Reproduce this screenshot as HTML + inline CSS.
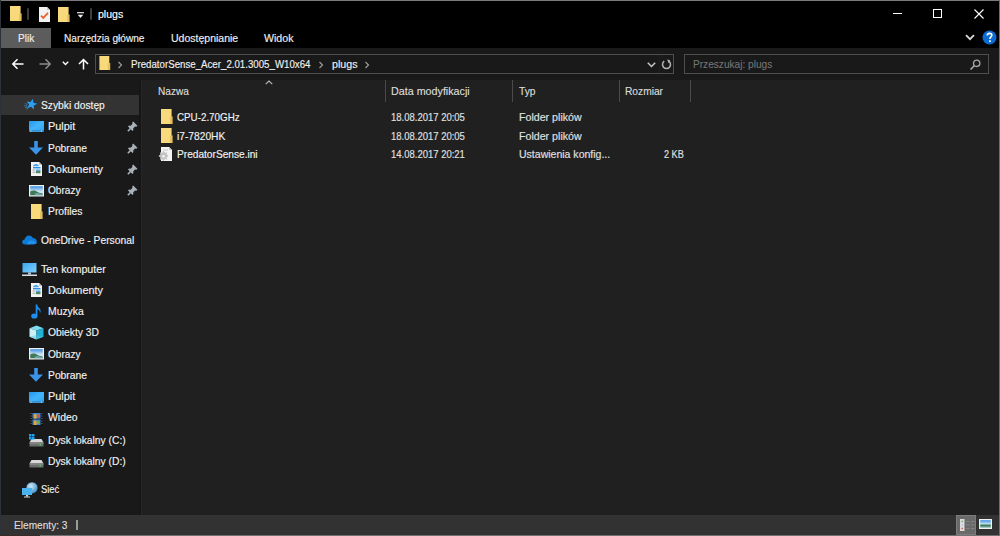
<!DOCTYPE html>
<html><head><meta charset="utf-8"><style>
html,body{margin:0;padding:0;width:1000px;height:536px;overflow:hidden;background:#000}
body{position:relative;font-family:"Liberation Sans",sans-serif}
.t{position:absolute;white-space:nowrap;transform-origin:0 0;-webkit-text-stroke:0.15px currentColor}
.r{position:absolute}
.i{position:absolute;display:block}
</style></head><body>
<div class="r" style="left:0;top:0;width:1000px;height:536px;background:#000"></div>
<div class="r" style="left:0;top:0;width:1000px;height:1px;background:#7a7a7a"></div>
<div class="r" style="left:0;top:0;width:1px;height:536px;background:#2c313a"></div>
<div class="r" style="left:999px;top:0;width:1px;height:536px;background:#6e6e6e"></div>
<div class="r" style="left:40px;top:535px;width:960px;height:1px;background:#707070"></div>
<div class="r" style="left:0;top:535px;width:40px;height:1px;background:#3a2a28"></div>
<div class="r" style="left:1px;top:48px;width:998px;height:32px;background:#191919"></div>
<div class="r" style="left:1px;top:80px;width:140px;height:435px;background:#191919"></div>
<div class="r" style="left:141px;top:80px;width:858px;height:435px;background:#202020"></div>
<div class="r" style="left:139px;top:80px;width:2px;height:435px;background:#161616"></div>
<div class="r" style="left:141px;top:80px;width:1px;height:435px;background:#262626"></div>
<div class="r" style="left:1px;top:515px;width:998px;height:20px;background:#323232"></div>
<svg class="i" style="left:10px;top:6px" width="12" height="15" viewBox="0 0 12 15"><path d="M0 0H10.6V15H0Z" fill="#f8d97c"/><path d="M9 8.2L11.6 7.2V15H9Z" fill="#e6c05e"/></svg>
<div class="r" style="left:27px;top:8px;width:2px;height:12px;background:#3e3e3e;border-radius:1px"></div>
<svg class="i" style="left:39px;top:7px" width="11" height="15" viewBox="0 0 11 15"><path d="M0 0H8L11 3V15H0Z" fill="#f2f2f2"/><path d="M8 0V3H11Z" fill="#c9c9c9"/><path d="M2 8.6L4.3 10.9L9 5.8" fill="none" stroke="#e8602c" stroke-width="1.7"/></svg>
<svg class="i" style="left:58px;top:7px" width="12" height="15" viewBox="0 0 12 15"><path d="M0 0H10.6V15H0Z" fill="#f8d97c"/><path d="M9 8.2L11.6 7.2V15H9Z" fill="#e6c05e"/></svg>
<svg class="i" style="left:77px;top:12px" width="7" height="7" viewBox="0 0 7 7"><rect x="0" y="0" width="7" height="1.3" fill="#cfcfcf"/><path d="M0.8 2.8H6.2L3.5 6Z" fill="#eee"/></svg>
<div class="r" style="left:90px;top:8px;width:2px;height:12px;background:#3e3e3e;border-radius:1px"></div>
<div class="t" style="left:98.30px;top:9px;font-size:11px;line-height:11px;color:#ffffff;transform:scaleX(0.9585);">plugs</div>
<div class="r" style="left:893px;top:13px;width:9px;height:1px;background:#fff"></div>
<div class="r" style="left:933px;top:9px;width:9px;height:9px;border:1px solid #fff;box-sizing:border-box"></div>
<svg class="i" style="left:974px;top:9px" width="10" height="10" viewBox="0 0 10 10"><path d="M0.5 0.5L9.5 9.5M9.5 0.5L0.5 9.5" stroke="#fff" stroke-width="1.1"/></svg>
<div class="r" style="left:1px;top:28px;width:50px;height:20px;background:#5c5c5c"></div>
<div class="t" style="left:17.80px;top:33px;font-size:11px;line-height:11px;color:#f0f0f0;transform:scaleX(0.9119);">Plik</div>
<div class="t" style="left:63.70px;top:33px;font-size:11px;line-height:11px;color:#f0f0f0;transform:scaleX(0.9205);">Narzędzia główne</div>
<div class="t" style="left:170.80px;top:33px;font-size:11px;line-height:11px;color:#f0f0f0;transform:scaleX(0.9553);">Udostępnianie</div>
<div class="t" style="left:264.20px;top:33px;font-size:11px;line-height:11px;color:#f0f0f0;transform:scaleX(0.9630);">Widok</div>
<svg class="i" style="left:965px;top:34px" width="10" height="7" viewBox="0 0 10 7"><path d="M1 1.2L5 5.2L9 1.2" fill="none" stroke="#d8d8d8" stroke-width="1.8"/></svg>
<svg class="i" style="left:982px;top:30px" width="15" height="15" viewBox="0 0 15 15"><circle cx="7.5" cy="7.5" r="7" fill="#0b6bd0"/><path d="M5.3 5.6C5.3 4.2 6.3 3.4 7.6 3.4C8.9 3.4 9.8 4.2 9.8 5.3C9.8 6.6 8.2 6.9 8.0 8.2V9" fill="none" stroke="#fff" stroke-width="1.6"/><rect x="7.1" y="10.3" width="1.7" height="1.7" fill="#fff"/></svg>
<svg class="i" style="left:11px;top:58px" width="14" height="12" viewBox="0 0 14 12"><path d="M12.5 6H2M6.5 1.3L1.8 6L6.5 10.7" fill="none" stroke="#fff" stroke-width="1.5"/></svg>
<svg class="i" style="left:38px;top:58px" width="14" height="12" viewBox="0 0 14 12"><path d="M1.5 6H12M7.5 1.3L12.2 6L7.5 10.7" fill="none" stroke="#8c8c8c" stroke-width="1.5"/></svg>
<svg class="i" style="left:62px;top:61px" width="7" height="5" viewBox="0 0 7 5"><path d="M0.8 0.8L3.5 3.5L6.2 0.8" fill="none" stroke="#fff" stroke-width="1.4"/></svg>
<svg class="i" style="left:78px;top:58px" width="11" height="12" viewBox="0 0 11 12"><path d="M5.5 11.5V1.5M1 6L5.5 1.5L10 6" fill="none" stroke="#fff" stroke-width="1.5"/></svg>
<div class="r" style="left:95px;top:54px;width:579px;height:20px;border:1px solid #4e4e4e;box-sizing:border-box;background:#191919"></div>
<svg class="i" style="left:99px;top:56px" width="12" height="14" viewBox="0 0 12 15"><path d="M0 0H10.6V15H0Z" fill="#f8d97c"/><path d="M9 8.2L11.6 7.2V15H9Z" fill="#e6c05e"/></svg>
<svg class="i" style="left:117px;top:61px" width="6" height="8" viewBox="0 0 6 8"><path d="M1.5 1L4.5 4L1.5 7" fill="none" stroke="#9a9a9a" stroke-width="1.2"/></svg>
<div class="t" style="left:131.20px;top:59px;font-size:11px;line-height:11px;color:#f0f0f0;transform:scaleX(0.8813);">PredatorSense_Acer_2.01.3005_W10x64</div>
<svg class="i" style="left:318px;top:61px" width="6" height="8" viewBox="0 0 6 8"><path d="M1.5 1L4.5 4L1.5 7" fill="none" stroke="#9a9a9a" stroke-width="1.2"/></svg>
<div class="t" style="left:331.70px;top:59px;font-size:11px;line-height:11px;color:#f0f0f0;transform:scaleX(0.9700);">plugs</div>
<svg class="i" style="left:364px;top:61px" width="6" height="8" viewBox="0 0 6 8"><path d="M1.5 1L4.5 4L1.5 7" fill="none" stroke="#9a9a9a" stroke-width="1.2"/></svg>
<svg class="i" style="left:647px;top:62px" width="9" height="6" viewBox="0 0 9 6"><path d="M0.8 0.8L4.5 4.5L8.2 0.8" fill="none" stroke="#c8c8c8" stroke-width="1.5"/></svg>
<div class="r" style="left:659px;top:55px;width:1px;height:18px;background:#1e1e1e"></div>
<svg class="i" style="left:661px;top:59px" width="11" height="11" viewBox="0 0 11 11"><path d="M7.8 2.2A4 4 0 1 1 3.2 2.2" fill="none" stroke="#b4b4b4" stroke-width="1.5"/><path d="M6.2 0.3L9.2 1.5L7.6 4.3Z" fill="#b4b4b4"/></svg>
<div class="r" style="left:684px;top:54px;width:305px;height:20px;border:1px solid #4e4e4e;box-sizing:border-box;background:#191919"></div>
<div class="t" style="left:692.60px;top:59px;font-size:11px;line-height:11px;color:#747474;transform:scaleX(0.9190);-webkit-text-stroke:0.1px currentColor">Przeszukaj: plugs</div>
<svg class="i" style="left:969px;top:58px" width="12" height="12" viewBox="0 0 12 12"><circle cx="7.7" cy="5.3" r="3.2" fill="none" stroke="#a8a8a8" stroke-width="1.3"/><path d="M5.5 7.5L1.5 11.5" stroke="#a8a8a8" stroke-width="1.6"/></svg>
<svg class="i" style="left:265px;top:80px" width="8" height="5" viewBox="0 0 8 5"><path d="M0.7 4.2L4 1L7.3 4.2" fill="none" stroke="#bdbdbd" stroke-width="1.1"/></svg>
<div class="t" style="left:158.40px;top:86px;font-size:11px;line-height:11px;color:#dcdcdc;transform:scaleX(0.9180);">Nazwa</div>
<div class="r" style="left:385px;top:80px;width:1px;height:22px;background:#4a4a4a"></div>
<div class="r" style="left:512px;top:80px;width:1px;height:22px;background:#4a4a4a"></div>
<div class="r" style="left:619px;top:80px;width:1px;height:22px;background:#4a4a4a"></div>
<div class="r" style="left:690px;top:80px;width:1px;height:22px;background:#4a4a4a"></div>
<div class="t" style="left:390.50px;top:86px;font-size:11px;line-height:11px;color:#dcdcdc;transform:scaleX(0.9754);">Data modyfikacji</div>
<div class="t" style="left:518.80px;top:86px;font-size:11px;line-height:11px;color:#dcdcdc;transform:scaleX(0.9317);">Typ</div>
<div class="t" style="left:625.00px;top:86px;font-size:11px;line-height:11px;color:#dcdcdc;transform:scaleX(0.9274);">Rozmiar</div>
<svg class="i" style="left:161px;top:109px" width="12" height="15" viewBox="0 0 12 15"><path d="M0 0H10.6V15H0Z" fill="#f8d97c"/><path d="M9 8.2L11.6 7.2V15H9Z" fill="#e6c05e"/></svg>
<div class="t" style="left:177.40px;top:112px;font-size:11px;line-height:11px;color:#f2f2f2;transform:scaleX(0.8906);">CPU-2.70GHz</div>
<div class="t" style="left:390.90px;top:112px;font-size:11px;line-height:11px;color:#e0e0e0;transform:scaleX(0.8630);">18.08.2017 20:05</div>
<div class="t" style="left:518.60px;top:112px;font-size:11px;line-height:11px;color:#e0e0e0;transform:scaleX(0.9669);">Folder plików</div>
<svg class="i" style="left:161px;top:128px" width="12" height="15" viewBox="0 0 12 15"><path d="M0 0H10.6V15H0Z" fill="#f8d97c"/><path d="M9 8.2L11.6 7.2V15H9Z" fill="#e6c05e"/></svg>
<div class="t" style="left:177.40px;top:131px;font-size:11px;line-height:11px;color:#f2f2f2;transform:scaleX(0.9293);">i7-7820HK</div>
<div class="t" style="left:390.90px;top:131px;font-size:11px;line-height:11px;color:#e0e0e0;transform:scaleX(0.8630);">18.08.2017 20:05</div>
<div class="t" style="left:518.60px;top:131px;font-size:11px;line-height:11px;color:#e0e0e0;transform:scaleX(0.9669);">Folder plików</div>
<svg class="i" style="left:158px;top:146px" width="15" height="16" viewBox="0 0 15 16"><path d="M3 1H11L14 4V15H3Z" fill="#f4f4f4"/><path d="M11 1V4H14Z" fill="#c8c8c8"/><rect x="5" y="3" width="5" height="2" fill="#e0e0e0"/><g transform="translate(5.5 10.3)"><path d="M-0.8 -4.6H0.8L1.2 -3.2L2.5 -2.6L3.7 -3.4L4.8 -2.3L4 -1.1L4.6 0.2L6 0.6V2.2L4.6 2.6L4 3.9L4.8 5.1L3.7 6.2L2.5 5.4L1.2 6L0.8 7.4H-0.8L-1.2 6L-2.5 5.4L-3.7 6.2L-4.8 5.1L-4 3.9L-4.6 2.6L-6 2.2V0.6L-4.6 0.2L-4 -1.1L-4.8 -2.3L-3.7 -3.4L-2.5 -2.6L-1.2 -3.2Z" transform="translate(0 -1.4) scale(0.78)" fill="#c4c4c4"/><circle cx="0" cy="0" r="1.4" fill="#f0f0f0"/></g></svg>
<div class="t" style="left:177.40px;top:149px;font-size:11px;line-height:11px;color:#f2f2f2;transform:scaleX(0.9217);">PredatorSense.ini</div>
<div class="t" style="left:390.90px;top:149px;font-size:11px;line-height:11px;color:#e0e0e0;transform:scaleX(0.8630);">14.08.2017 20:21</div>
<div class="t" style="left:518.60px;top:149px;font-size:11px;line-height:11px;color:#e0e0e0;transform:scaleX(0.9563);">Ustawienia konfig...</div>
<div class="t" style="left:663.60px;top:149px;font-size:11px;line-height:11px;color:#e0e0e0;transform:scaleX(0.8295);">2 KB</div>
<div class="r" style="left:1px;top:95px;width:138px;height:20px;background:#333333"></div>
<svg class="i" style="left:24px;top:98px" width="14" height="12" viewBox="0 0 14 12"><path d="M8.81 0.63 L9.46 4.63 L13.37 5.69 L9.77 7.55 L9.96 11.60 L7.08 8.75 L3.29 10.18 L5.11 6.56 L2.58 3.40 L6.58 4.02Z" fill="#2a9ef4"/><path d="M0.8 5.6L3.6 6.4M0.2 7.6L3.4 8M1 9.6L3.6 9.2M2.4 11.2L4.2 10.2" stroke="#2a9ef4" stroke-width="0.9" opacity="0.7"/></svg>
<div class="t" style="left:41.20px;top:100px;font-size:11px;line-height:11px;color:#f2f2f2;transform:scaleX(0.9317);">Szybki dostęp</div>
<svg class="i" style="left:29px;top:121px" width="15" height="11" viewBox="0 0 15 11"><defs><linearGradient id="gd" x1="0" y1="0" x2="1" y2="1"><stop offset="0" stop-color="#1f98f0"/><stop offset="0.5" stop-color="#45b4fa"/><stop offset="1" stop-color="#2aa2f2"/></linearGradient></defs><rect x="0" y="0" width="15" height="11" fill="url(#gd)"/><rect x="0" y="9.3" width="15" height="1.7" fill="#1a78c0"/><rect x="1.2" y="9.6" width="1.4" height="1" fill="#e8f4ff"/><rect x="11.8" y="9.6" width="1.4" height="1" fill="#e8f4ff"/><rect x="2.6" y="9.9" width="9.2" height="0.5" fill="#8ec9f0"/></svg>
<div class="t" style="left:48.30px;top:121px;font-size:11px;line-height:11px;color:#f2f2f2;transform:scaleX(0.9927);">Pulpit</div>
<svg class="i" style="left:127px;top:121px" width="11" height="11" viewBox="0 0 11 11"><path d="M6.2 0.6L10.4 4.8L9.4 5.8L8 5.6L6.2 7.4L6.4 9L5.4 10L1 5.6L2 4.6L3.6 4.8L5.4 3L5.2 1.6Z" fill="#a9b1b9"/><path d="M3.4 7.6L0.8 10.2" stroke="#a9b1b9" stroke-width="1.5"/></svg>
<svg class="i" style="left:29px;top:141px" width="14" height="14" viewBox="0 0 14 14"><rect x="5.2" y="0" width="3.6" height="7" fill="#3b94e8"/><path d="M0 6.5H14L7 13.8Z" fill="#3b94e8"/></svg>
<div class="t" style="left:48.30px;top:143px;font-size:11px;line-height:11px;color:#f2f2f2;transform:scaleX(0.9380);">Pobrane</div>
<svg class="i" style="left:127px;top:143px" width="11" height="11" viewBox="0 0 11 11"><path d="M6.2 0.6L10.4 4.8L9.4 5.8L8 5.6L6.2 7.4L6.4 9L5.4 10L1 5.6L2 4.6L3.6 4.8L5.4 3L5.2 1.6Z" fill="#a9b1b9"/><path d="M3.4 7.6L0.8 10.2" stroke="#a9b1b9" stroke-width="1.5"/></svg>
<svg class="i" style="left:31px;top:162px" width="11" height="14" viewBox="0 0 11 14"><path d="M0 0H8L11 3V14H0Z" fill="#f3f3f3"/><path d="M8 0V3H11Z" fill="#c4c4c4"/><path d="M2 4.2C2 3 3 2.3 4 2.6C4.5 1.6 6.2 1.6 6.6 2.8C7.6 2.8 8 3.6 7.8 4.2Z" fill="#4aa6ea"/><rect x="2" y="5" width="7.5" height="1.4" fill="#2e90e2"/><rect x="1.5" y="7.6" width="3" height="0.9" fill="#9a9a9a"/><rect x="1.5" y="9.8" width="3" height="0.9" fill="#9a9a9a"/><rect x="5" y="7.4" width="4.5" height="1.6" fill="#5aa8e8"/><rect x="5" y="9" width="4.5" height="2.2" fill="#4f8a60"/></svg>
<div class="t" style="left:48.30px;top:164px;font-size:11px;line-height:11px;color:#f2f2f2;transform:scaleX(0.9881);">Dokumenty</div>
<svg class="i" style="left:127px;top:164px" width="11" height="11" viewBox="0 0 11 11"><path d="M6.2 0.6L10.4 4.8L9.4 5.8L8 5.6L6.2 7.4L6.4 9L5.4 10L1 5.6L2 4.6L3.6 4.8L5.4 3L5.2 1.6Z" fill="#a9b1b9"/><path d="M3.4 7.6L0.8 10.2" stroke="#a9b1b9" stroke-width="1.5"/></svg>
<svg class="i" style="left:29px;top:185px" width="15" height="12" viewBox="0 0 15 12"><defs><linearGradient id="gp" x1="0" y1="0" x2="0" y2="1"><stop offset="0" stop-color="#3d8fe4"/><stop offset="0.55" stop-color="#c9e2f2"/><stop offset="1" stop-color="#d8e8ee"/></linearGradient></defs><rect x="0" y="0" width="15" height="11.5" fill="#f0f0f0"/><rect x="1.2" y="1.2" width="12.6" height="9" fill="url(#gp)"/><path d="M1.2 6.5C4 5 6.5 5.5 9 7.2C10.5 8 12 8.3 13.8 8.5V10.2H1.2Z" fill="#3f7a58"/><path d="M6 8.5C8.5 8 11 9 13.8 9.2V10.2H6Z" fill="#7fb4c0" opacity="0.8"/></svg>
<div class="t" style="left:48.30px;top:185px;font-size:11px;line-height:11px;color:#f2f2f2;transform:scaleX(0.9161);">Obrazy</div>
<svg class="i" style="left:127px;top:185px" width="11" height="11" viewBox="0 0 11 11"><path d="M6.2 0.6L10.4 4.8L9.4 5.8L8 5.6L6.2 7.4L6.4 9L5.4 10L1 5.6L2 4.6L3.6 4.8L5.4 3L5.2 1.6Z" fill="#a9b1b9"/><path d="M3.4 7.6L0.8 10.2" stroke="#a9b1b9" stroke-width="1.5"/></svg>
<svg class="i" style="left:31px;top:204px" width="12" height="15" viewBox="0 0 12 15"><path d="M0 0H10.6V15H0Z" fill="#f8d97c"/><path d="M9 8.2L11.6 7.2V15H9Z" fill="#e6c05e"/></svg>
<div class="t" style="left:48.30px;top:206px;font-size:11px;line-height:11px;color:#f2f2f2;transform:scaleX(0.9377);">Profiles</div>
<svg class="i" style="left:22px;top:235px" width="15" height="10" viewBox="0 0 15 10"><path d="M3 9.5C1.3 9.5 0.2 8.4 0.2 7C0.2 5.6 1.3 4.6 2.6 4.6C3 2.3 4.8 0.6 7 0.6C8.8 0.6 10.2 1.6 10.9 3.1C13.2 3.1 14.8 4.6 14.8 6.4C14.8 8.2 13.4 9.5 11.6 9.5Z" fill="#0f7bd9"/><path d="M5 9.5C5.3 7 7 5.4 9.6 5.4C11 5.4 12 6 12.8 6.8C14 7 14.8 7.8 14.8 8.5" fill="#2b9bf2" opacity="0.7"/></svg>
<div class="t" style="left:41.10px;top:235px;font-size:11px;line-height:11px;color:#f2f2f2;transform:scaleX(0.9352);">OneDrive - Personal</div>
<svg class="i" style="left:22px;top:263px" width="15" height="13" viewBox="0 0 15 13"><defs><linearGradient id="gm" x1="0" y1="0" x2="1" y2="1"><stop offset="0" stop-color="#3aa6ef"/><stop offset="1" stop-color="#7fd0ff"/></linearGradient></defs><rect x="0.5" y="0" width="14" height="9.5" fill="url(#gm)"/><rect x="6" y="9.5" width="3" height="2" fill="#b8c4cc"/><rect x="0" y="11.5" width="15" height="1.5" fill="#d9dee2"/></svg>
<div class="t" style="left:41.10px;top:264px;font-size:11px;line-height:11px;color:#f2f2f2;transform:scaleX(0.9721);">Ten komputer</div>
<svg class="i" style="left:31px;top:283px" width="11" height="14" viewBox="0 0 11 14"><path d="M0 0H8L11 3V14H0Z" fill="#f3f3f3"/><path d="M8 0V3H11Z" fill="#c4c4c4"/><path d="M2 4.2C2 3 3 2.3 4 2.6C4.5 1.6 6.2 1.6 6.6 2.8C7.6 2.8 8 3.6 7.8 4.2Z" fill="#4aa6ea"/><rect x="2" y="5" width="7.5" height="1.4" fill="#2e90e2"/><rect x="1.5" y="7.6" width="3" height="0.9" fill="#9a9a9a"/><rect x="1.5" y="9.8" width="3" height="0.9" fill="#9a9a9a"/><rect x="5" y="7.4" width="4.5" height="1.6" fill="#5aa8e8"/><rect x="5" y="9" width="4.5" height="2.2" fill="#4f8a60"/></svg>
<div class="t" style="left:48.30px;top:285px;font-size:11px;line-height:11px;color:#f2f2f2;transform:scaleX(0.9881);">Dokumenty</div>
<svg class="i" style="left:31px;top:304px" width="11" height="15" viewBox="0 0 11 15"><ellipse cx="3.3" cy="12" rx="3.1" ry="2.6" fill="#1d8ff2"/><rect x="4.7" y="0.5" width="1.7" height="11.5" fill="#1d8ff2"/><path d="M5.5 0.5C6 2.5 8 3.5 9 5C10 6.5 9.6 8.2 8.8 9.6C9.2 8 8.8 6.6 7.5 5.8C6.8 5.4 6.2 5.2 5.5 5.1Z" fill="#1d8ff2"/></svg>
<div class="t" style="left:48.30px;top:306px;font-size:11px;line-height:11px;color:#f2f2f2;transform:scaleX(0.9433);">Muzyka</div>
<svg class="i" style="left:29px;top:325px" width="15" height="15" viewBox="0 0 15 15"><path d="M0.5 3.2L7.5 0.5L14.5 3.2L7.5 5.6Z" fill="#7fdcef"/><path d="M0.5 3.2L7.5 5.6V14.5L0.5 11.8Z" fill="#c8f2f8"/><path d="M14.5 3.2L7.5 5.6V14.5L14.5 11.8Z" fill="#1fb2d6"/><path d="M7.5 10L14.5 11.8L7.5 14.5L0.5 11.8Z" fill="#58c8e0" opacity="0.5"/></svg>
<div class="t" style="left:48.30px;top:327px;font-size:11px;line-height:11px;color:#f2f2f2;transform:scaleX(0.9357);">Obiekty 3D</div>
<svg class="i" style="left:29px;top:348px" width="15" height="12" viewBox="0 0 15 12"><defs><linearGradient id="gp" x1="0" y1="0" x2="0" y2="1"><stop offset="0" stop-color="#3d8fe4"/><stop offset="0.55" stop-color="#c9e2f2"/><stop offset="1" stop-color="#d8e8ee"/></linearGradient></defs><rect x="0" y="0" width="15" height="11.5" fill="#f0f0f0"/><rect x="1.2" y="1.2" width="12.6" height="9" fill="url(#gp)"/><path d="M1.2 6.5C4 5 6.5 5.5 9 7.2C10.5 8 12 8.3 13.8 8.5V10.2H1.2Z" fill="#3f7a58"/><path d="M6 8.5C8.5 8 11 9 13.8 9.2V10.2H6Z" fill="#7fb4c0" opacity="0.8"/></svg>
<div class="t" style="left:48.30px;top:349px;font-size:11px;line-height:11px;color:#f2f2f2;transform:scaleX(0.9161);">Obrazy</div>
<svg class="i" style="left:29px;top:368px" width="14" height="14" viewBox="0 0 14 14"><rect x="5.2" y="0" width="3.6" height="7" fill="#3b94e8"/><path d="M0 6.5H14L7 13.8Z" fill="#3b94e8"/></svg>
<div class="t" style="left:48.30px;top:370px;font-size:11px;line-height:11px;color:#f2f2f2;transform:scaleX(0.9380);">Pobrane</div>
<svg class="i" style="left:29px;top:392px" width="15" height="11" viewBox="0 0 15 11"><defs><linearGradient id="gd" x1="0" y1="0" x2="1" y2="1"><stop offset="0" stop-color="#1f98f0"/><stop offset="0.5" stop-color="#45b4fa"/><stop offset="1" stop-color="#2aa2f2"/></linearGradient></defs><rect x="0" y="0" width="15" height="11" fill="url(#gd)"/><rect x="0" y="9.3" width="15" height="1.7" fill="#1a78c0"/><rect x="1.2" y="9.6" width="1.4" height="1" fill="#e8f4ff"/><rect x="11.8" y="9.6" width="1.4" height="1" fill="#e8f4ff"/><rect x="2.6" y="9.9" width="9.2" height="0.5" fill="#8ec9f0"/></svg>
<div class="t" style="left:48.30px;top:391px;font-size:11px;line-height:11px;color:#f2f2f2;transform:scaleX(0.9927);">Pulpit</div>
<svg class="i" style="left:30px;top:412px" width="13" height="14" viewBox="0 0 13 14"><rect x="0" y="0" width="13" height="14" fill="#141414"/><rect x="0.6" y="1" width="1" height="1" fill="#777"/><rect x="11.4" y="1" width="1" height="1" fill="#777"/><rect x="0.6" y="3.5" width="1" height="1" fill="#777"/><rect x="11.4" y="3.5" width="1" height="1" fill="#777"/><rect x="0.6" y="6" width="1" height="1" fill="#777"/><rect x="11.4" y="6" width="1" height="1" fill="#777"/><rect x="0.6" y="8.5" width="1" height="1" fill="#777"/><rect x="11.4" y="8.5" width="1" height="1" fill="#777"/><rect x="0.6" y="11" width="1" height="1" fill="#777"/><rect x="11.4" y="11" width="1" height="1" fill="#777"/><rect x="2.5" y="1" width="8" height="5.6" fill="#3d86d8"/><rect x="2.5" y="7.4" width="8" height="5.6" fill="#3d86d8"/><rect x="4" y="2.2" width="2.6" height="4.4" fill="#e0a63c"/><rect x="7" y="2.5" width="2.4" height="3" fill="#d05a4a"/><rect x="4" y="8.6" width="2.6" height="4.4" fill="#e0a63c"/><rect x="7" y="9" width="2.4" height="3" fill="#6ab04c"/></svg>
<div class="t" style="left:48.30px;top:412px;font-size:11px;line-height:11px;color:#f2f2f2;transform:scaleX(0.9460);">Wideo</div>
<svg class="i" style="left:29px;top:434px" width="15" height="13" viewBox="0 0 15 13"><path d="M2.5 5H12.5L14.5 8.5H0.5Z" fill="#d8d8d8"/><rect x="0.5" y="8.5" width="14" height="4" fill="#6e6e6e"/><rect x="0.5" y="8.5" width="14" height="1" fill="#9a9a9a"/><rect x="10.5" y="10" width="1.5" height="1.5" fill="#3ad04a"/><rect x="0" y="0" width="2.5" height="2.5" fill="#1aa3ef"/><rect x="3" y="0" width="2.5" height="2.5" fill="#1aa3ef"/><rect x="0" y="3" width="2.5" height="2.5" fill="#1aa3ef"/><rect x="3" y="3" width="2.5" height="2.5" fill="#1aa3ef"/></svg>
<div class="t" style="left:48.30px;top:435px;font-size:11px;line-height:11px;color:#f2f2f2;transform:scaleX(0.9350);">Dysk lokalny (C:)</div>
<svg class="i" style="left:29px;top:455px" width="15" height="13" viewBox="0 0 15 13"><path d="M2.5 5H12.5L14.5 8.5H0.5Z" fill="#d8d8d8"/><rect x="0.5" y="8.5" width="14" height="4" fill="#6e6e6e"/><rect x="0.5" y="8.5" width="14" height="1" fill="#9a9a9a"/><rect x="10.5" y="10" width="1.5" height="1.5" fill="#3ad04a"/></svg>
<div class="t" style="left:48.30px;top:456px;font-size:11px;line-height:11px;color:#f2f2f2;transform:scaleX(0.9350);">Dysk lokalny (D:)</div>
<svg class="i" style="left:22px;top:482px" width="16" height="16" viewBox="0 0 16 16"><defs><radialGradient id="gg" cx="0.4" cy="0.35" r="0.7"><stop offset="0" stop-color="#cfeaf8"/><stop offset="1" stop-color="#3a8cc0"/></radialGradient></defs><circle cx="10" cy="5.8" r="5.6" fill="url(#gg)"/><rect x="0" y="6" width="10" height="7" fill="#49b3ef"/><rect x="4" y="13" width="2" height="1.5" fill="#cfd8de"/><rect x="2" y="14.5" width="6" height="1" fill="#cfd8de"/></svg>
<div class="t" style="left:41.00px;top:484px;font-size:11px;line-height:11px;color:#f2f2f2;transform:scaleX(0.8553);">Sieć</div>
<div class="t" style="left:13.50px;top:520px;font-size:11px;line-height:11px;color:#dcdcdc;transform:scaleX(0.9211);">Elementy: 3</div>
<div class="r" style="left:76px;top:520px;width:2px;height:10px;background:#9a9a9a"></div>
<div class="r" style="left:956px;top:515px;width:20px;height:20px;background:#6a6a6a;box-shadow:inset 0 0 0 1px #7c7c7c"></div>
<svg class="i" style="left:960px;top:519px" width="15" height="12" viewBox="0 0 15 12"><rect x="0" y="0" width="4.5" height="12" fill="#dcdcdc"/><rect x="1.6" y="1.8" width="1.3" height="1.3" fill="#5aa060"/><rect x="1.6" y="5.3" width="1.3" height="1.3" fill="#9cc8f0"/><rect x="1.6" y="8.8" width="1.3" height="1.3" fill="#e04040"/><rect x="6" y="2" width="3.5" height="0.8" fill="#8a8a8a"/><rect x="11" y="2" width="3.5" height="0.8" fill="#8a8a8a"/><rect x="6" y="5.5" width="3.5" height="0.8" fill="#8a8a8a"/><rect x="11" y="5.5" width="3.5" height="0.8" fill="#8a8a8a"/><rect x="6" y="9" width="3.5" height="0.8" fill="#8a8a8a"/><rect x="11" y="9" width="3.5" height="0.8" fill="#8a8a8a"/></svg>
<svg class="i" style="left:979px;top:519px" width="13" height="10" viewBox="0 0 13 10"><defs><linearGradient id="gl" x1="0" y1="0" x2="0" y2="1"><stop offset="0" stop-color="#3d8fe6"/><stop offset="0.45" stop-color="#b9dcf0"/><stop offset="0.7" stop-color="#3f7a55"/><stop offset="1" stop-color="#9cc4c8"/></linearGradient></defs><rect x="0" y="0" width="13" height="10" fill="#f2f2f2"/><rect x="1.2" y="1.2" width="10.6" height="7.6" fill="url(#gl)"/></svg>
</body></html>
